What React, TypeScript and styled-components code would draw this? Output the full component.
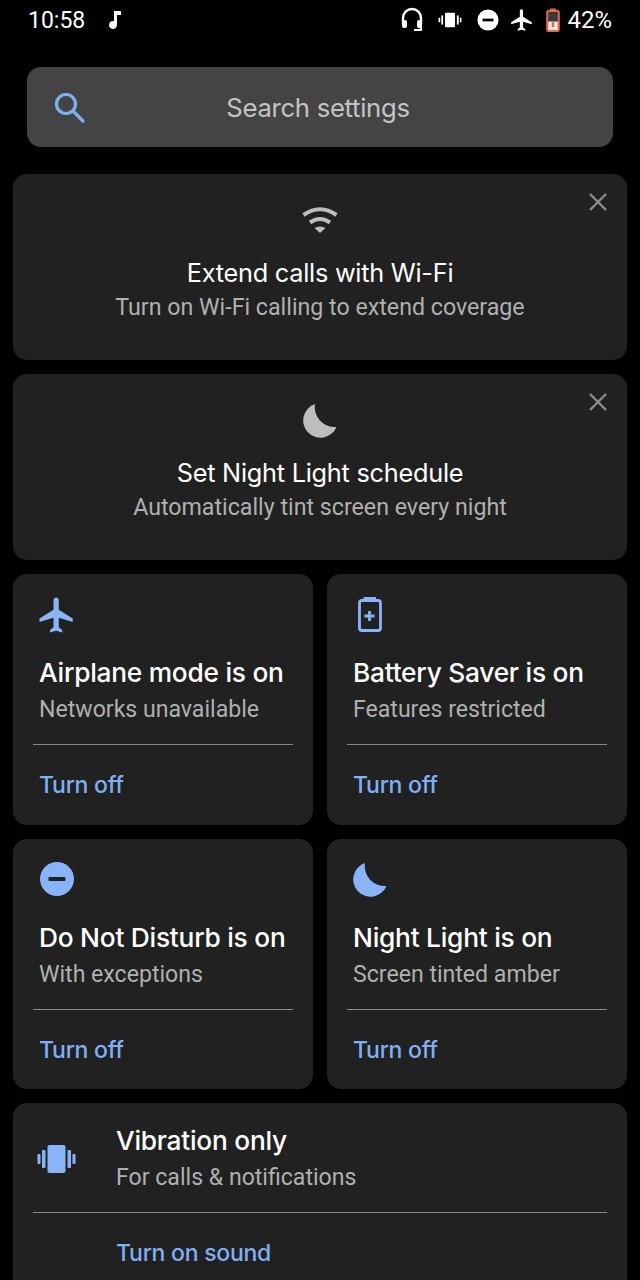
import styled, { createGlobalStyle } from "styled-components";

const GlobalStyle = createGlobalStyle`
  html, body {
    margin: 0;
    padding: 0;
    background: #000;
  }
  * {
    box-sizing: border-box;
  }
`;

const Page = styled.div`
  width: 640px;
  height: 1280px;
  overflow: hidden;
  background: #000;
  font-family: Roboto, "Liberation Sans", sans-serif;
  display: flex;
  flex-direction: column;
`;

const StatusBar = styled.div`
  height: 40px;
  flex: none;
  display: flex;
  align-items: center;
  padding: 0 28px;
  color: #fff;
  font-size: 24px;
`;

const Clock = styled.span`
  width: 79px;
  font-size: 23px;
`;

const StatusRight = styled.div`
  margin-left: auto;
  display: flex;
  align-items: center;
`;

const StatusIcon = styled.svg<{ $gap?: number }>`
  display: block;
  margin-right: ${({ $gap }) => $gap ?? 0}px;
`;

const Content = styled.div`
  display: flex;
  flex-direction: column;
  gap: 14px;
  padding: 0 13px;
`;

const SearchBar = styled.div`
  height: 80px;
  flex: none;
  margin: 27px;
  padding-right: 4px;
  background: #444;
  border-radius: 14px;
  display: flex;
  align-items: center;
  justify-content: center;
  position: relative;
  color: #c4c4c4;
  font-family: Inter, Roboto, sans-serif;
  font-size: 25.7px;
  letter-spacing: -0.3px;
`;

const SearchIcon = styled.svg`
  position: absolute;
  left: 24px;
  top: 22px;
`;

const Card = styled.div`
  background: #212121;
  border-radius: 14px;
  position: relative;
`;

const SuggestionCard = styled(Card)`
  height: 186px;
  display: flex;
  flex-direction: column;
  align-items: center;
  padding-top: 26px;
`;

const CloseButton = styled.svg`
  position: absolute;
  top: 17px;
  right: 18px;
`;

const SuggestionIcon = styled.div`
  height: 40px;
  margin-bottom: 16px;
`;

const SuggestionTitle = styled.div`
  color: #fff;
  font-family: Inter, Roboto, sans-serif;
  font-size: 25.3px;
  line-height: 34px;
  letter-spacing: -0.25px;
`;

const SuggestionText = styled.div`
  color: #b0b0b0;
  font-size: 23.2px;
  line-height: 34px;
`;

const Grid = styled.div`
  display: grid;
  grid-template-columns: 1fr 1fr;
  gap: 14px;
`;

const ConditionCard = styled(Card)`
  height: 250.5px;
  padding: 20px 20px 0;
  display: flex;
  flex-direction: column;
`;

const ConditionIcon = styled.div`
  height: 42px;
  margin-left: 3px;
  margin-bottom: 20px;
`;

const ConditionTitle = styled.div`
  color: #fff;
  font-family: Inter, Roboto, sans-serif;
  font-size: 26.3px;
  font-weight: 500;
  line-height: 34px;
  letter-spacing: -0.25px;
  margin-left: 6px;
  white-space: nowrap;
`;

const ConditionText = styled.div`
  color: #b0b0b0;
  font-size: 23.1px;
  line-height: 38px;
  margin: 1px 0 0 6px;
`;

const Divider = styled.div`
  height: 1px;
  background: #8a8a8a;
  margin-top: 15px;
`;

const TurnOff = styled.div`
  color: #7fb0f5;
  font-family: Inter, Roboto, sans-serif;
  font-size: 23px;
  font-weight: 500;
  line-height: 34px;
  letter-spacing: -0.25px;
  margin: 23px 0 0 6px;
`;

const VibrationCard = styled(Card)`
  height: 190px;
  padding: 21px 20px 0;
`;

const VibrationRow = styled.div`
  display: flex;
  align-items: center;
`;

const VibrationIcon = styled.svg`
  flex: none;
  margin: 0 39px 4px 4px;
`;

const VibrationTitle = styled(ConditionTitle)`
  margin-left: 0;
`;

const VibrationText = styled(ConditionText)`
  margin-left: 0;
`;

const VibrationAction = styled(TurnOff)`
  margin: 23px 0 0 83px;
`;

const IconBox = styled.svg`
  display: block;
`;

const PLANE =
  "M21 16v-2l-8-5V3.5c0-.83-.67-1.5-1.5-1.5S10 2.67 10 3.5V9l-8 5v2l8-2.5V19l-2 1.5V22l3.5-1 3.5 1v-1.5L13 19v-5.5l8 2.5z";

const Moon = ({ color }: { color: string }) => (
  <IconBox width="40" height="40" viewBox="-3 -3 40 40" fill={color}>
    <path d="M12 1A17.300 17.300 0 1 0 33.500 24 A20 20 0 0 1 12 1z" />
  </IconBox>
);

const Close = () => (
  <CloseButton width="22" height="22" viewBox="0 0 22 22" stroke="#8c8c8c" strokeWidth="2.4" fill="none">
    <path d="M3 3l16 16M19 3L3 19" />
  </CloseButton>
);

const conditions = [
  {
    title: "Airplane mode is on",
    text: "Networks unavailable",
    icon: (
      <IconBox width="42" height="42" viewBox="0 0 24 24" fill="#8ab4f8">
        <path d={PLANE} />
      </IconBox>
    ),
  },
  {
    title: "Battery Saver is on",
    text: "Features restricted",
    icon: (
      <IconBox width="42" height="42" viewBox="0 0 42 42" fill="none">
        <rect x="9.500" y="6.500" width="21" height="30" rx="2.500" stroke="#8ab4f8" strokeWidth="2.800" />
        <rect x="13.500" y="3" width="12.500" height="4" fill="#8ab4f8" />
        <path d="M19.500 17v10M14.500 22h10" stroke="#8ab4f8" strokeWidth="2.800" />
      </IconBox>
    ),
  },
  {
    title: "Do Not Disturb is on",
    text: "With exceptions",
    icon: (
      <IconBox width="42" height="42" viewBox="0 0 42 42">
        <circle cx="21" cy="20" r="17" fill="#8ab4f8" />
        <rect x="12.500" y="18" width="17" height="4" rx="1" fill="#212121" />
      </IconBox>
    ),
  },
  {
    title: "Night Light is on",
    text: "Screen tinted amber",
    icon: <Moon color="#8ab4f8" />,
  },
];

export default function App() {
  return (
    <Page>
      <GlobalStyle />
      <StatusBar>
        <Clock>10:58</Clock>
        <StatusIcon width="16" height="24" viewBox="0 0 16 24" fill="#fff">
          <path d="M7 3h7v4h-4v10a4 4 0 1 1-3-3.900z" />
        </StatusIcon>
        <StatusRight>
          <StatusIcon $gap={14} width="24" height="26" viewBox="0 0 24 26" fill="none" stroke="#fff">
            <path d="M3 17v-6a9 9 0 0 1 18 0v6" strokeWidth="2.400" />
            <rect x="2" y="13" width="5" height="8" rx="2" fill="#fff" strokeWidth="0" />
            <rect x="17" y="13" width="5" height="8" rx="2" fill="#fff" strokeWidth="0" />
            <path d="M21 20v3h-7" strokeWidth="1.800" />
          </StatusIcon>
          <StatusIcon $gap={15} width="24" height="22" viewBox="0 0 26 24" fill="#fff">
            <rect x="7.500" y="4" width="11" height="16" rx="1.500" />
            <rect x="3.500" y="7" width="2" height="10" />
            <rect x="20.500" y="7" width="2" height="10" />
            <rect x="0.500" y="9.500" width="1.800" height="5" />
            <rect x="23.700" y="9.500" width="1.800" height="5" />
          </StatusIcon>
          <StatusIcon $gap={10} width="22" height="22" viewBox="0 0 24 24">
            <circle cx="12" cy="12" r="11.500" fill="#fff" />
            <rect x="6" y="10.500" width="12" height="3" fill="#000" />
          </StatusIcon>
          <StatusIcon $gap={10} width="26" height="26" viewBox="0 0 24 24" fill="#fff">
            <path d={PLANE} />
          </StatusIcon>
          <StatusIcon $gap={6} width="16" height="26" viewBox="0 0 16 26" fill="none">
            <rect x="2.200" y="4" width="11.600" height="20" rx="1.200" fill="#3a3a3a" stroke="#e2694e" strokeWidth="2" />
            <rect x="5" y="1.500" width="6" height="2.500" fill="#e2694e" />
            <path d="M3.200 14.500h9.600V23H3.200z" fill="#f2e4de" />
            <path d="M8 15v5" stroke="#e2694e" strokeWidth="2.400" />
          </StatusIcon>
          <span>42%</span>
        </StatusRight>
      </StatusBar>

      <SearchBar>
        <SearchIcon width="36" height="36" viewBox="0 0 36 36" fill="none" stroke="#7fb0f0" strokeWidth="3.200">
          <circle cx="15" cy="15" r="9.500" />
          <path d="M22 22l10 10" strokeLinecap="round" />
        </SearchIcon>
        Search settings
      </SearchBar>

      <Content>
        <SuggestionCard>
          <Close />
          <SuggestionIcon>
            <IconBox width="40" height="40" viewBox="0 0 40 40" fill="none" stroke="#bdbdbd" strokeWidth="4">
              <path d="M3.500 15Q20 3.500 36.500 15" />
              <path d="M10 22.500Q20 15.500 30 22.500" />
              <path d="M20 33l-5.500-5Q20 25 25.500 28z" fill="#bdbdbd" strokeWidth="0" />
            </IconBox>
          </SuggestionIcon>
          <SuggestionTitle>Extend calls with Wi-Fi</SuggestionTitle>
          <SuggestionText>Turn on Wi-Fi calling to extend coverage</SuggestionText>
        </SuggestionCard>
        <SuggestionCard>
          <Close />
          <SuggestionIcon>
            <Moon color="#bdbdbd" />
          </SuggestionIcon>
          <SuggestionTitle>Set Night Light schedule</SuggestionTitle>
          <SuggestionText>Automatically tint screen every night</SuggestionText>
        </SuggestionCard>

        <Grid>
          {conditions.map((c) => (
            <ConditionCard key={c.title}>
              <ConditionIcon>{c.icon}</ConditionIcon>
              <ConditionTitle>{c.title}</ConditionTitle>
              <ConditionText>{c.text}</ConditionText>
              <Divider />
              <TurnOff>Turn off</TurnOff>
            </ConditionCard>
          ))}
        </Grid>

        <VibrationCard>
          <VibrationRow>
            <VibrationIcon width="40" height="40" viewBox="0 0 40 40" fill="#8ab4f8">
              <rect x="10.500" y="6" width="18" height="28" rx="2" />
              <rect x="5" y="11" width="3.500" height="18" rx="1" />
              <rect x="30.500" y="11" width="3.500" height="18" rx="1" />
              <rect x="0.500" y="15" width="3" height="10" rx="1" />
              <rect x="35.500" y="15" width="3" height="10" rx="1" />
            </VibrationIcon>
            <div>
              <VibrationTitle>Vibration only</VibrationTitle>
              <VibrationText>For calls &amp; notifications</VibrationText>
            </div>
          </VibrationRow>
          <Divider />
          <VibrationAction>Turn on sound</VibrationAction>
        </VibrationCard>
      </Content>
    </Page>
  );
}
